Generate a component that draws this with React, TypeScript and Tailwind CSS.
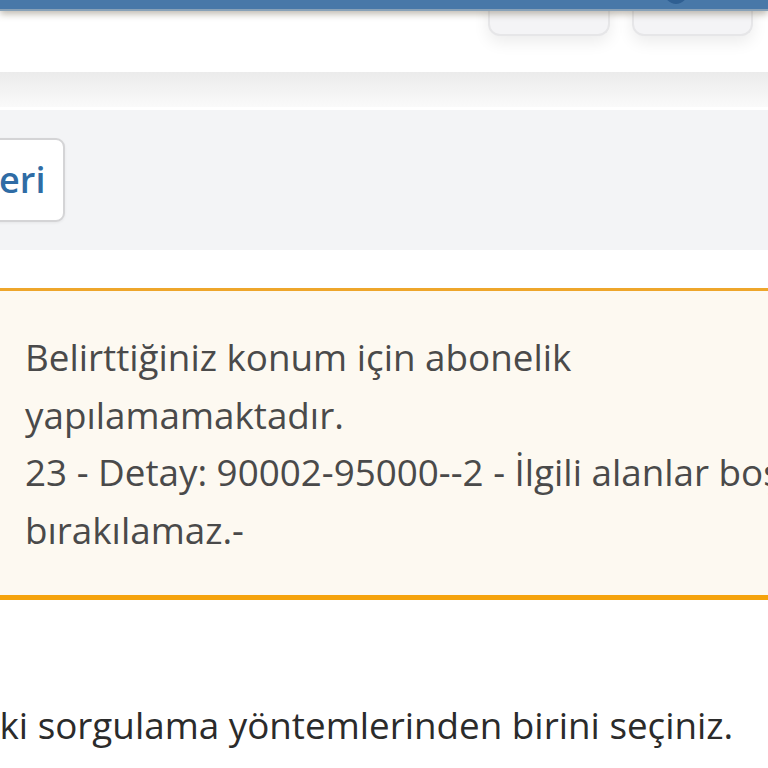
import React from "react";

export default function App() {
  return (
    <div
      className="relative w-[768px] h-[768px] overflow-hidden bg-white"
      style={{ fontFamily: '"Open Sans", "Noto Sans", sans-serif' }}
    >
      {/* fixed header overlay */}
      <div className="absolute top-0 left-0 right-0 z-10 h-[11px] bg-[#4878a8] border-b-2 border-[#88a1b7] shadow-[0_3px_7px_rgba(110,100,80,0.45)]">
        <svg className="absolute left-[664px] top-[-6px]" width="24" height="12" viewBox="0 0 24 12">
          <path d="M4 4 Q12 12 20 4" stroke="#2f5f92" strokeWidth="4" fill="none" strokeLinecap="round" />
        </svg>
      </div>

      {/* toolbar */}
      <div className="h-[72px] flex justify-end items-start gap-[22px] pr-[15px]">
        <div className="w-[122px] h-[36px] rounded-b-[12px] border-2 border-t-0 border-[#e6e6e8] bg-[#f4f4f6] shadow-[0_6px_16px_rgba(0,0,0,0.08)]" />
        <div className="w-[121px] h-[36px] rounded-b-[12px] border-2 border-t-0 border-[#e6e6e8] bg-[#f4f4f6] shadow-[0_6px_16px_rgba(0,0,0,0.08)]" />
      </div>

      {/* shadow strip */}
      <div className="h-[35px] bg-gradient-to-b from-[#ebebeb] to-[#fafafa]" />
      <div className="h-[3px] bg-white" />

      {/* gray panel with back button */}
      <div className="h-[140px] bg-[#f3f4f6] flex items-center">
        <button className="ml-[-47px] h-[84px] px-[18px] flex items-center rounded-[9px] border-2 border-[#d4d4d6] bg-white shadow-[0_1px_3px_rgba(0,0,0,0.06)] text-[36px] leading-[1.6] font-semibold text-[#2f6ca5]">
          Geri
        </button>
      </div>

      <div className="h-[38px]" />

      {/* warning alert */}
      <div className="border-t-[3px] border-b-[5px] border-t-[#eea62b] border-b-[#f5a30d] bg-[#fdf9f1] pt-[38px] pb-[36px] pl-[25px] text-[36.8px] leading-[57.6px] text-[#4a4a4a]">
        <div className="whitespace-nowrap">Belirttiğiniz konum için abonelik</div>
        <div className="whitespace-nowrap">yapılamamaktadır.</div>
        <div className="whitespace-nowrap">23 - Detay: 90002-95000--2 - İlgili alanlar boş</div>
        <div className="whitespace-nowrap">bırakılamaz.-</div>
      </div>

      {/* instruction text */}
      <p className="mt-[97px] ml-[-134px] whitespace-nowrap text-[36.8px] leading-[57.6px] text-[#2b2b2b]">
        Aşağıdaki sorgulama yöntemlerinden birini seçiniz.
      </p>
    </div>
  );
}
